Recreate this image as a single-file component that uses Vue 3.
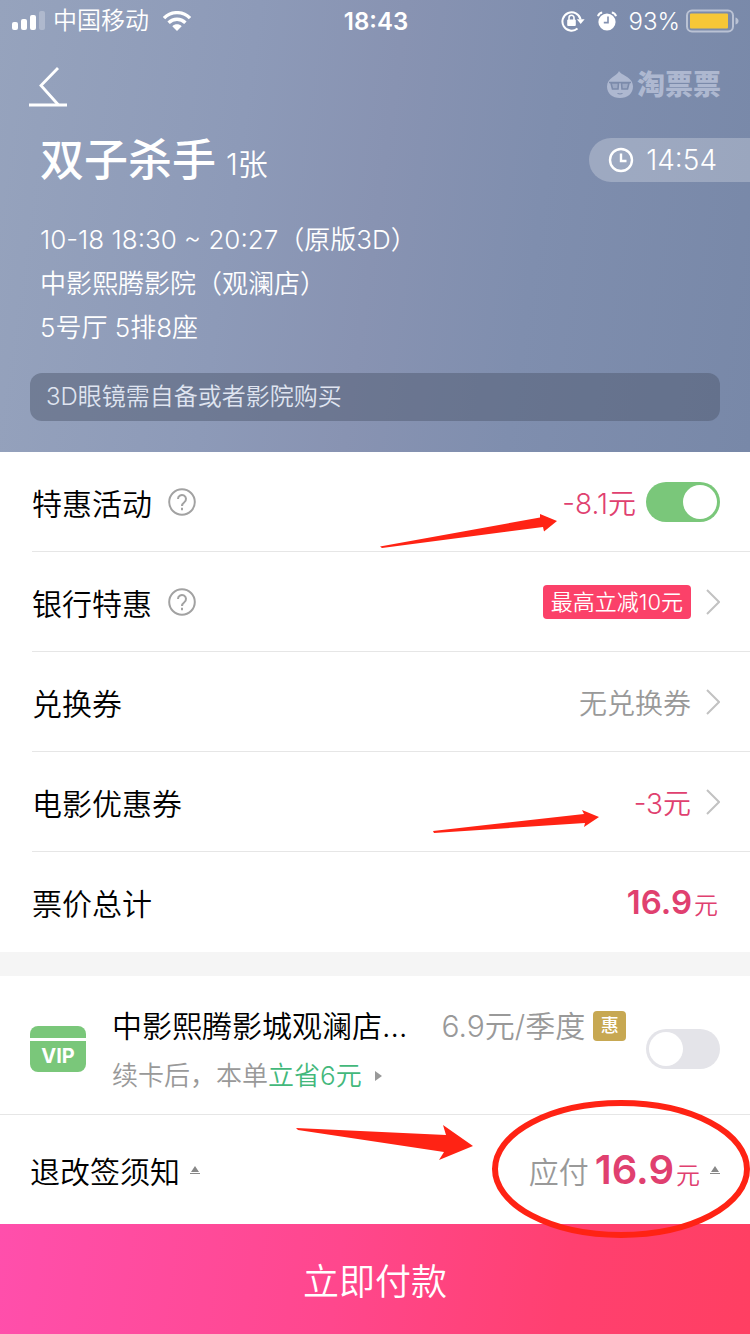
<script setup>
import { ref } from 'vue'

const promoOn = ref(true)
const vipOn = ref(false)
const info = ['10-18 18:30 ~ 20:27（原版3D）', '中影熙腾影院（观澜店）', '5号厅 5排8座']
</script>

<template>
  <div class="page">
    <header class="hero">
      <div class="status">
        <div class="status-side">
          <svg class="signal" width="34" height="20" viewBox="0 0 34 20" fill="#fff" aria-hidden="true">
            <rect x="0" y="11" width="6" height="8" rx="2" />
            <rect x="9" y="8" width="6" height="11" rx="2" />
            <rect x="18" y="4" width="6" height="15" rx="2" />
            <rect x="27" y="0" width="6" height="19" rx="2" opacity=".25" />
          </svg>
          <span class="carrier">中国移动</span>
          <svg class="wifi" width="28" height="20" viewBox="0 0 28 20" fill="none" stroke="#fff" stroke-width="3.4" aria-hidden="true">
            <path d="M1 7.200C8-.2 20-.2 27 7.200" />
            <path d="M5.600 11.800C10.400 7 17.600 7 22.400 11.800" />
            <path d="M14 20L9.300 15.200C12 12.600 16 12.600 18.700 15.200Z" fill="#fff" stroke="none" />
          </svg>
        </div>
        <span class="clock">18:43</span>
        <div class="status-side status-right">
          <svg width="24" height="22" viewBox="0 0 24 22" fill="none" aria-hidden="true">
            <path d="M16.500 18.600A9.200 9.200 0 1 1 19.600 9.400" stroke="#fff" stroke-width="2" />
            <path d="M15.800 9.300H23.600L19.700 14Z" fill="#fff" />
            <rect x="6.200" y="9.600" width="8.600" height="6.400" rx="1" fill="#fff" />
            <path d="M8 10V7.800a2.500 2.500 0 0 1 5 0V10" stroke="#fff" stroke-width="1.600" />
          </svg>
          <svg width="20" height="20" viewBox="0 0 20 20" fill="none" aria-hidden="true">
            <circle cx="10" cy="11" r="8.600" fill="#fff" />
            <path d="M1 5.200Q1.800 1.800 5.200 1.400M19 5.200Q18.200 1.800 14.800 1.400" stroke="#fff" stroke-width="2" />
            <path d="M11 5.500V11.600H6.800" stroke="#8290b0" stroke-width="1.600" />
          </svg>
          <span class="percent">93%</span>
          <svg width="54" height="24" viewBox="0 0 54 24" fill="none" aria-hidden="true">
            <rect x="1" y="1.500" width="46" height="21" rx="5" stroke="#bac2d4" stroke-width="2" />
            <rect x="4" y="4.500" width="38" height="15" rx="1" fill="#f6c737" />
            <path d="M49.500 8.500Q52.500 9.500 52.500 12T49.500 15.500Z" fill="#bac2d4" />
          </svg>
        </div>
      </div>

      <div class="nav">
        <button class="back" type="button" aria-label="返回">
          <svg width="38" height="42" viewBox="0 0 38 42" fill="none" stroke="#fff" aria-hidden="true">
            <path d="M29 3L12 20.500L29.500 40" stroke-width="2.800" />
            <path d="M0 40H38" stroke-width="2.800" />
          </svg>
        </button>
        <div class="brand">
          <svg width="26" height="28" viewBox="0 0 26 28" aria-hidden="true">
            <path d="M12 0C14 4.500 26 5.500 26 15.500C26 22.500 20.500 27 13 27S0 22.500 0 15.500C0 6.500 10.500 5 12 0Z" fill="#aeb8d0" />
            <path d="M2 11.500H24M4 12H11.500L11 18H5.500ZM14.500 12H22L20.500 18H15Z" fill="#9ca8c3" stroke="#7c8bab" stroke-width="1.600" />
            <path d="M10.500 22.500Q13 23.500 15.500 22.500" fill="none" stroke="#7c8bab" />
          </svg>
          <span>淘票票</span>
        </div>
      </div>

      <div class="title-row">
        <h1>双子杀手</h1>
        <span class="count">1张</span>
        <div class="countdown">
          <svg width="26" height="26" viewBox="0 0 26 26" fill="none" stroke="#fff" stroke-width="2.400" aria-hidden="true">
            <circle cx="13" cy="13" r="11" />
            <path d="M13 6.500V14H18.500" />
          </svg>
          <span>14:54</span>
        </div>
      </div>

      <div class="info">
        <p v-for="line in info" :key="line">{{ line }}</p>
      </div>
      <p class="notice">3D眼镜需自备或者影院购买</p>
    </header>

    <main>
      <section class="rows">
        <div class="row">
          <label for="promo">特惠活动</label>
          <button class="help" type="button" aria-label="特惠活动说明">
            <svg width="28" height="28" viewBox="0 0 28 28" fill="none" stroke="#a2a2a2" stroke-width="2" aria-hidden="true">
              <circle cx="14" cy="14" r="12.800" />
              <path d="M10 11a4 4 0 1 1 6.300 3.200C14.600 15.400 14 16 14 18" />
              <path d="M14 19.800V22.200" />
            </svg>
          </button>
          <span class="amount pink">-8.1元</span>
          <input id="promo" v-model="promoOn" class="switch" type="checkbox" role="switch" />
          <svg class="mark mark-promo" width="178" height="36" viewBox="0 0 178 36" aria-hidden="true">
            <path d="M0 33.500L160 4.500L160 1L177 8L164 18.500L163 14L2 35Z" fill="#ff2314" />
          </svg>
        </div>

        <div class="row">
          <span>银行特惠</span>
          <button class="help" type="button" aria-label="银行特惠说明">
            <svg width="28" height="28" viewBox="0 0 28 28" fill="none" stroke="#a2a2a2" stroke-width="2" aria-hidden="true">
              <circle cx="14" cy="14" r="12.800" />
              <path d="M10 11a4 4 0 1 1 6.300 3.200C14.600 15.400 14 16 14 18" />
              <path d="M14 19.800V22.200" />
            </svg>
          </button>
          <span class="tag">最高立减10元</span>
          <svg class="chevron" width="14" height="26" viewBox="0 0 14 26" aria-hidden="true"><path d="M1 1L13 13L1 25" /></svg>
        </div>

        <div class="row">
          <span>兑换券</span>
          <span class="amount gray">无兑换券</span>
          <svg class="chevron" width="14" height="26" viewBox="0 0 14 26" aria-hidden="true"><path d="M1 1L13 13L1 25" /></svg>
        </div>

        <div class="row">
          <span>电影优惠券</span>
          <span class="amount pink">-3元</span>
          <svg class="chevron" width="14" height="26" viewBox="0 0 14 26" aria-hidden="true"><path d="M1 1L13 13L1 25" /></svg>
          <svg class="mark mark-coupon" width="168" height="26" viewBox="0 0 168 26" aria-hidden="true">
            <path d="M1 22L152 5L150 1L167 8L152 18L153 14L2 24Z" fill="#ff2314" />
          </svg>
        </div>

        <div class="row">
          <span>票价总计</span>
          <span class="total pink"><b>16.9</b><small>元</small></span>
        </div>
      </section>

      <section class="vip">
        <div class="vip-card">VIP</div>
        <div class="vip-body">
          <div class="vip-line">
            <label class="vip-name" for="vip">中影熙腾影城观澜店…</label>
            <span class="vip-price">6.9元/季度</span>
            <span class="vip-tag">惠</span>
          </div>
          <div class="vip-sub">
            <span>续卡后，本单<em>立省6元</em></span>
            <svg width="8" height="10" viewBox="0 0 8 10" aria-hidden="true"><path d="M1 0L8 5L1 10Z" fill="#999" /></svg>
          </div>
        </div>
        <input id="vip" v-model="vipOn" class="switch" type="checkbox" role="switch" />
      </section>

      <section class="summary">
        <button class="rules" type="button">
          <span>退改签须知</span>
          <svg width="10" height="10" viewBox="0 0 10 10" aria-hidden="true"><path d="M5 1L9 7H1ZM0 8H10V9H0Z" fill="#888" /></svg>
        </button>
        <button class="due" type="button">
          <span class="gray">应付</span>
          <span class="due-sum pink"><b>16.9</b><small>元</small></span>
          <svg width="10" height="10" viewBox="0 0 10 10" aria-hidden="true"><path d="M5 1L9 7H1ZM0 8H10V9H0Z" fill="#888" /></svg>
        </button>
        <svg class="mark mark-due" width="178" height="38" viewBox="0 0 178 38" aria-hidden="true">
          <path d="M0 1L150 8L147 -2L177 19L143 33L148 25L2 3Z" fill="#ff2314" />
        </svg>
        <svg class="mark mark-ring" width="258" height="138" viewBox="0 0 258 138" fill="none" aria-hidden="true">
          <ellipse cx="129" cy="69" rx="126" ry="66" stroke="#ff2314" stroke-width="6" />
        </svg>
      </section>
    </main>

    <button class="pay" type="button">立即付款</button>
  </div>
</template>

<style>
body {
  margin: 0;
  background: #fff;
}
</style>

<style scoped>
.page {
  min-height: 100vh;
  display: flex;
  flex-direction: column;
  overflow: hidden;
  font-family: Inter, "Noto Sans CJK SC", sans-serif;
  font-weight: 350;
  font-size: 30px;
  color: #000;
  background: #fff;
}
h1, p {
  margin: 0;
  font-weight: inherit;
}
button {
  padding: 0;
  border: 0;
  background: none;
  font: inherit;
  color: inherit;
  cursor: pointer;
}
svg {
  display: block;
  flex: none;
}
.hero {
  color: #fff;
  padding-bottom: 31px;
  background: linear-gradient(98deg, #96a3bd 0%, #8d9ab8 32%, #8893b2 50%, #7f8eae 70%, #7888a8 100%);
}
.status {
  display: flex;
  align-items: center;
  box-sizing: border-box;
  height: 40px;
  padding: 2px 10px 0 12px;
}
.status-side {
  flex: 1;
  display: flex;
  align-items: center;
}
.carrier {
  margin: 0 14px 0 7px;
  font-size: 24px;
  line-height: 38px;
}
.clock {
  font-size: 24px;
  font-weight: 600;
}
.status-right {
  justify-content: flex-end;
  gap: 12px;
}
.percent {
  font-size: 24px;
  margin-right: -6px;
}
.nav {
  display: flex;
  justify-content: space-between;
  align-items: center;
  height: 60px;
  margin: 16px 29px 22px;
}
.brand {
  display: flex;
  align-items: center;
  gap: 4px;
  padding-bottom: 2px;
  font-size: 28px;
  line-height: 30px;
  font-weight: 900;
  color: #aeb8d0;
}
.title-row {
  display: flex;
  align-items: center;
  height: 44px;
  padding-left: 40px;
}
h1 {
  font-size: 44px;
  line-height: 44px;
  font-weight: 500;
}
.count {
  margin: 8px 0 0 10px;
  font-size: 30px;
  line-height: 36px;
}
.countdown {
  display: flex;
  align-items: center;
  gap: 12px;
  height: 44px;
  margin-left: auto;
  padding: 0 33px 0 19px;
  border-radius: 22px 0 0 22px;
  background: rgba(255, 255, 255, .25);
  font-size: 28px;
}
.info {
  margin: 36px 40px 23px;
  font-size: 26px;
  line-height: 44px;
}
.notice {
  margin: 0 30px;
  padding: 0 16px;
  border-radius: 12px;
  background: rgba(80, 90, 112, .5);
  color: #dfe4f0;
  font-size: 24px;
  line-height: 48px;
}
.rows {
  border-bottom: 24px solid #f5f5f5;
}
.row {
  position: relative;
  display: flex;
  align-items: center;
  height: 99px;
  margin-left: 32px;
  padding-right: 30px;
  border-bottom: 1px solid #e6e6e6;
}
.row:last-child {
  border-bottom-color: transparent;
}
.help {
  margin-left: 16px;
}
.amount,
.tag,
.total {
  margin-left: auto;
}
.amount {
  font-size: 28px;
}
.pink {
  color: #e0406f;
}
.gray {
  color: #999;
}
.switch {
  appearance: none;
  flex: none;
  width: 74px;
  height: 40px;
  margin: 0 0 0 10px;
  padding: 3px;
  box-sizing: border-box;
  border-radius: 20px;
  background: #e4e4e9;
  cursor: pointer;
}
.switch::before {
  content: "";
  display: block;
  width: 34px;
  height: 34px;
  border-radius: 50%;
  background: #fff;
}
.switch:checked {
  background: #7ac77a;
}
.switch:checked::before {
  margin-left: auto;
}
.tag {
  padding: 0 8px;
  border-radius: 4px;
  background: #fb4169;
  color: #fff;
  font-size: 22px;
  line-height: 34px;
}
.chevron {
  margin-left: 15px;
  fill: none;
  stroke: #c2c2c2;
  stroke-width: 2;
}
.total {
  padding-right: 2px;
}
.total b,
.due b {
  font-weight: 600;
}
.total b {
  font-size: 33px;
}
small {
  margin-left: 2px;
  font-size: 24px;
}
.vip {
  display: flex;
  align-items: center;
  box-sizing: border-box;
  height: 139px;
  padding: 8px 30px 0;
  border-bottom: 1px solid #e6e6e6;
}
.vip-card {
  flex: none;
  width: 56px;
  height: 46px;
  border-radius: 8px;
  background: linear-gradient(#7ac77a 12px, #fff 12px, #fff 15px, #7ac77a 15px);
  box-sizing: border-box;
  padding-top: 16px;
  color: #fff;
  font-size: 20px;
  line-height: 28px;
  font-weight: 700;
  text-align: center;
}
.vip-body {
  flex: 1;
  min-width: 0;
  margin: 4px 0 0 26px;
}
.vip-line {
  display: flex;
  align-items: center;
  white-space: nowrap;
  line-height: 50px;
}
.vip-price {
  margin: 0 8px 0 34px;
  color: #999;
}
.vip-tag {
  width: 33px;
  border-radius: 4px;
  background: #c7a852;
  color: #fff;
  font-size: 18px;
  line-height: 30px;
  font-weight: 500;
  text-align: center;
}
.vip-sub {
  display: flex;
  align-items: center;
  gap: 12px;
  color: #999;
  font-size: 26px;
  line-height: 50px;
}
.vip-sub em {
  font-style: normal;
  color: #43b87b;
}
.summary {
  position: relative;
  display: flex;
  align-items: center;
  justify-content: space-between;
  height: 109px;
  padding: 0 30px;
}
.rules,
.due {
  display: flex;
  align-items: center;
  gap: 10px;
}
.due-sum {
  margin-left: -4px;
}
.due b {
  font-size: 40px;
}
.mark {
  position: absolute;
  pointer-events: none;
  overflow: visible;
}
.mark-promo {
  right: 192px;
  top: 61px;
}
.mark-coupon {
  right: 150px;
  top: 57px;
}
.mark-due {
  right: 276px;
  top: 12px;
}
.mark-ring {
  z-index: 1;
  right: 0;
  top: -15px;
}
.pay {
  flex: 1;
  min-height: 110px;
  background: linear-gradient(98deg, #ff4fac 0%, #ff478d 45%, #ff4070 75%, #ff3f62 100%);
  color: #fff;
  font-size: 36px;
}
</style>
